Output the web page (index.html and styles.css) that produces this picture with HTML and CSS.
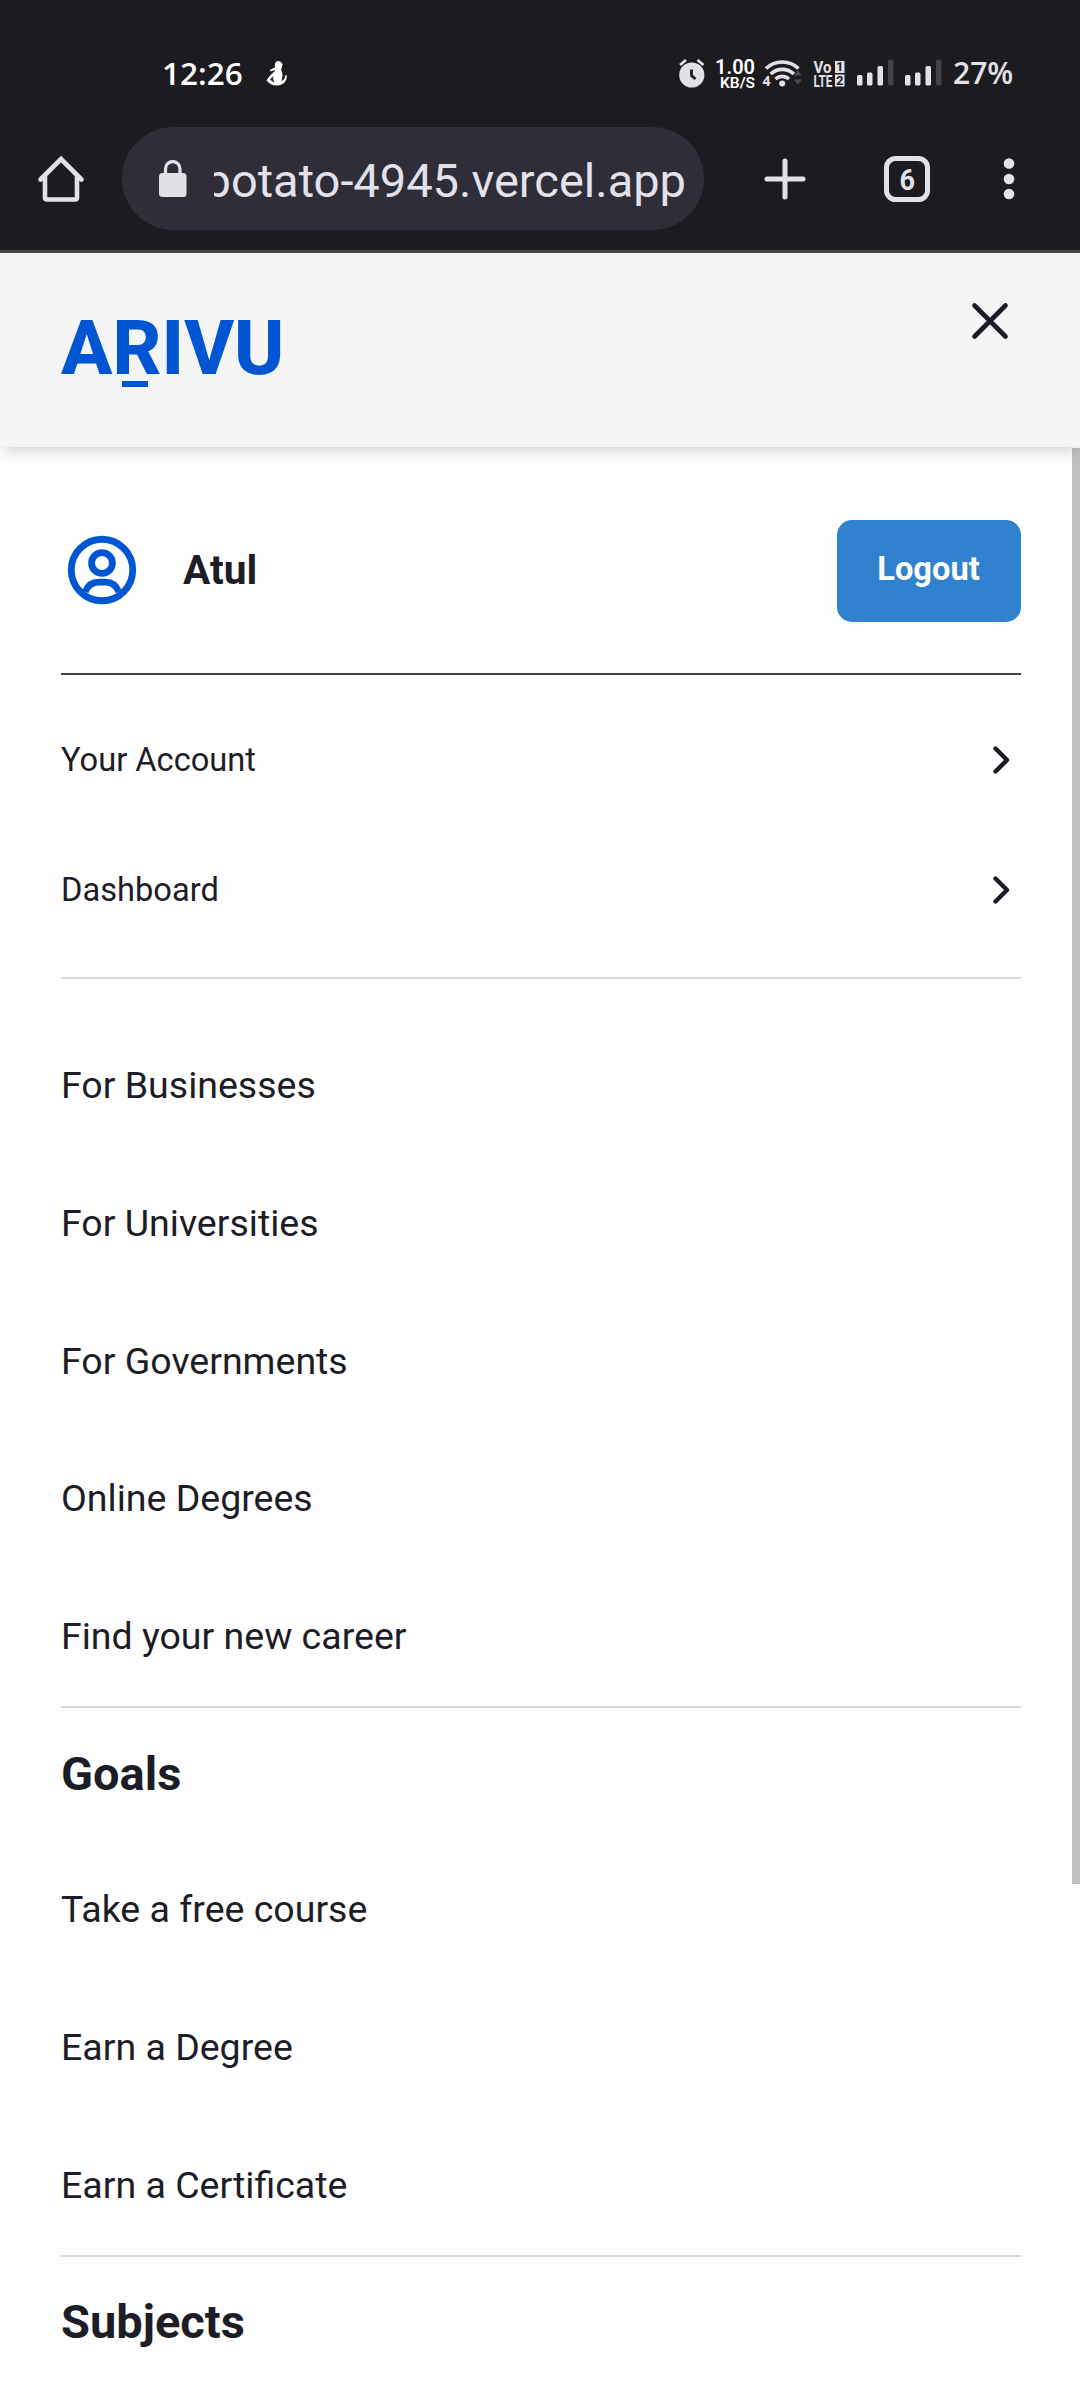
FILE: index.html
```
<!DOCTYPE html>
<html lang="en">
<head>
<meta charset="utf-8">
<title>Arivu</title>
<link rel="stylesheet" href="styles.css">
</head>
<body>
<div class="chrome">
  <div class="status">
    <span class="clock">12:26</span>
    <svg class="notif" width="24" height="26" viewBox="0 0 24 26" fill="#fff">
      <path d="M10 2.500a3.800 3.800 0 0 1 7 3c0 1.500-1 2.400-.8 3.500l1 3c.6 2 .3 4-.2 5.500l-.4 2.500c2.200-.7 3.500-2.500 3.600-5.500l1.500-.5c.5 5-2.200 10-9.700 10.500-4.500 0-8-2-10.500-5 2.500-4 4.500-6.500 8-9l.6-1.500-4.800 1.500-.5-1.500 5-2.500z"/>
      <path d="M5 18.500l3.500-3.500-.5 3 1.500 4z" fill="#1c1b20"/>
    </svg>
    <div class="indicators">
      <svg width="28" height="32" viewBox="0 0 28 32">
        <circle cx="13.800" cy="18" r="12.600" fill="#e3e1e6"/>
        <path d="M2 8l6-5M25.500 8l-6-5" stroke="#e3e1e6" stroke-width="2.800" fill="none"/>
        <path d="M13.500 12.500v6l4 3.500" stroke="#1c1b20" stroke-width="2.800" fill="none"/>
      </svg>
      <div class="speed"><span class="rate">1.00</span><span class="unit">KB/S</span></div>
      <svg class="wifi" width="40" height="32" viewBox="0 0 40 32">
        <g fill="none" stroke="#e3e1e6" stroke-width="3.600">
          <path d="M4 11.500a23.500 23.500 0 0 1 32.500 0"/><path d="M8.800 17a16.500 16.500 0 0 1 23 0"/><path d="M13.500 22a10 10 0 0 1 13.500 0"/>
        </g>
        <circle cx="20.200" cy="26.500" r="3" fill="#e3e1e6"/>
        <text x="0.500" y="29" class="wifi-gen">4</text>
        <path d="M31.500 18.500l4.500-5 4 5zM31.500 22.500h8.500l-4 5z" fill="#4b4a4f"/>
      </svg>
      <svg width="34" height="32" viewBox="0 0 34 32">
        <g class="volte" fill="#e3e1e6">
          <text x="1.500" y="15.500" textLength="18" lengthAdjust="spacingAndGlyphs">Vo</text>
          <text x="1.500" y="29.500" textLength="19" lengthAdjust="spacingAndGlyphs">LTE</text>
        </g>
        <path d="M23 4h9.500v12h-9.500zM23 17.500h9.500v12h-9.500z" fill="#e3e1e6"/>
        <g class="sim" fill="#1c1b20" text-anchor="middle"><text x="27.800" y="14">1</text><text x="27.800" y="27.700">2</text></g>
      </svg>
      <svg width="38" height="32" viewBox="0 0 38 32" fill="#e3e1e6">
        <rect x="1" y="18" width="5.500" height="10.500" rx="1.500"/><rect x="11" y="15.500" width="5.500" height="13" rx="1.500"/><rect x="21.500" y="9" width="5.500" height="19.500" rx="1.500"/><rect x="32" y="2.500" width="5.500" height="26" rx="1.500" fill="#434247"/>
      </svg>
      <svg width="38" height="32" viewBox="0 0 38 32" fill="#e3e1e6">
        <rect x="1" y="18" width="5.500" height="10.500" rx="1.500"/><rect x="11" y="15.500" width="5.500" height="13" rx="1.500"/><rect x="21.500" y="9" width="5.500" height="19.500" rx="1.500"/><rect x="32" y="2.500" width="5.500" height="26" rx="1.500" fill="#434247"/>
      </svg>
      <span class="battery">27%</span>
    </div>
  </div>
  <div class="toolbar">
    <svg class="home" width="48" height="48" viewBox="0 0 48 48" fill="none" stroke="#e3e1e6" stroke-width="4.600" stroke-linecap="round" stroke-linejoin="round">
      <path d="M8 22v20.500q0 2 2 2h28q2 0 2-2V22"/><path d="M3.500 24.500L24 4l20.500 20.500" stroke-linejoin="miter"/>
    </svg>
    <div class="omnibox">
      <svg width="28" height="38" viewBox="0 0 28 38">
        <rect x="0" y="13" width="27.500" height="24" rx="3.500" fill="#e3e1e6"/>
        <path d="M6.500 14V9a7 7.200 0 0 1 14.500 0v5" fill="none" stroke="#e3e1e6" stroke-width="3.200"/>
      </svg>
      <div class="url"><span>potato-4945.vercel.app</span></div>
    </div>
    <svg class="plus" width="42" height="42" viewBox="0 0 42 42" stroke="#e3e1e6" stroke-width="5" stroke-linecap="round"><path d="M21 3v36M3 21h36"/></svg>
    <svg class="tabs" width="48" height="48" viewBox="0 0 48 48">
      <rect x="3.500" y="3.500" width="41" height="41" rx="9" fill="none" stroke="#e3e1e6" stroke-width="5"/>
      <text x="16.500" y="34.500" textLength="15.500" lengthAdjust="spacingAndGlyphs" class="tab-count">6</text>
    </svg>
    <svg class="more" width="12" height="42" viewBox="0 0 12 42" fill="#e3e1e6"><circle cx="6" cy="5.500" r="5.300"/><circle cx="6" cy="21" r="5.300"/><circle cx="6" cy="36" r="5.300"/></svg>
  </div>
</div>

<header class="header">
  <a class="logo">A<span class="logo-r">R</span>IVU</a>
  <svg class="close" width="38" height="38" viewBox="0 0 38 38" stroke="#1b1c25" stroke-width="4.600" stroke-linecap="round"><path d="M3.500 3.500l31 31M34.500 3.500l-31 31"/></svg>
</header>

<main class="menu">
  <section class="user">
    <svg class="avatar" width="82" height="82" viewBox="0 0 24 24" fill="none" stroke="#0056d2" stroke-width="2">
      <circle cx="12" cy="12" r="9"/><circle cx="12" cy="9.950" r="3.050"/><path d="M7.100 18.400C7.900 16.300 9.300 15.550 11 15.550h2c1.700 0 3.100.75 3.900 2.850"/>
    </svg>
    <span class="name">Atul</span>
    <button class="logout">Logout</button>
  </section>
  <nav class="account">
    <a class="row">Your Account<svg width="18" height="30" viewBox="0 0 18 30"><path d="M3.500 3.500L15 15 3.500 26.500"/></svg></a>
    <a class="row">Dashboard<svg width="18" height="30" viewBox="0 0 18 30"><path d="M3.500 3.500L15 15 3.500 26.500"/></svg></a>
  </nav>
  <nav class="links first">
    <a>For Businesses</a><a>For Universities</a><a>For Governments</a><a>Online Degrees</a><a>Find your new career</a>
  </nav>
  <nav class="links">
    <h2>Goals</h2>
    <a>Take a free course</a><a>Earn a Degree</a><a>Earn a Certificate</a>
  </nav>
  <nav class="links last"><h2>Subjects</h2></nav>
  <div class="scrollbar"></div>
</main>
</body>
</html>
```
FILE: styles.css
```
* { box-sizing: border-box; }
body {
  margin: 0; height: 2400px; overflow: hidden;
  display: flex; flex-direction: column;
  background: #fefefe; color: #1c1d26;
  font-family: Roboto, sans-serif;
}
svg { display: block; flex: none; }

.chrome { height: 253px; flex: none; background: #1c1b20; border-bottom: 3px solid #49474c; }
.status { height: 127px; padding: 20px 67px 0 162px; display: flex; align-items: center; color: #fff; }
.clock { font: 600 31.500px/38px "Open Sans", sans-serif; width: 103px; margin-top: -2px; }
.indicators { margin-left: auto; margin-top: -2px; display: flex; align-items: center; gap: 10px; }
.speed { width: 39px; display: flex; flex-direction: column; align-items: flex-end; font-weight: 600; margin-top: 2px; }
.rate { font-size: 20px; line-height: 18px; }
.unit { font-size: 15.500px; line-height: 14px; }
.wifi { margin-left: -3px; }
.wifi-gen { font: 700 14px "Open Sans", sans-serif; fill: #e3e1e6; }
.volte { font: 700 17px Roboto, sans-serif; }
.sim { font: 700 13px Roboto, sans-serif; }
.battery { width: 60px; font: 600 30px/40px "Open Sans", sans-serif; color: #e3e1e6; margin-left: 1px; }

.toolbar { height: 103px; padding: 0 65px 0 37px; display: flex; align-items: center; }
.omnibox { width: 582px; height: 103px; margin-left: 37px; padding: 0 18px 0 37px; border-radius: 52px; background: #2e2d38; display: flex; align-items: center; gap: 27px; }
.url { flex: 1; height: 60px; overflow: hidden; display: flex; justify-content: flex-end; font-size: 47px; line-height: 64px; color: #e3e1ec; white-space: nowrap; }
.plus { margin-left: 60px; }
.tabs { margin-left: 77px; }
.tab-count { font: 700 30px Roboto, sans-serif; fill: #e3e1e6; }
.more { margin-left: auto; }

.header {
  height: 194px; flex: none; padding: 0 71px 0 61px; position: relative; z-index: 1;
  display: flex; justify-content: space-between;
  background: #f5f5f5;
  box-shadow: 0 10px 15px -3px rgba(0,0,0,.1), 0 5px 10px -3px rgba(0,0,0,.06);
}
.logo { font-size: 76px; font-weight: 800; line-height: 191px; color: #0056d2; }
.logo-r { position: relative; }
.logo-r::after { content: ""; position: absolute; left: 10px; bottom: 6px; width: 26px; height: 6px; background: #0056d2; }
.close { margin-top: 49px; }

.menu { flex: 1; padding: 0 59px 0 61px; position: relative; }
.user { height: 228px; padding-top: 73px; display: flex; align-items: flex-start; border-bottom: 2px solid #414045; }
.avatar { margin-top: 9px; }
.name { margin-left: 40px; font-size: 40.600px; font-weight: 700; line-height: 101px; }
.logout { margin-left: auto; width: 184px; height: 102px; padding: 0 1px 4px 0; border: 0; border-radius: 15px; background: #3182ce; color: #fff; font: 700 32.640px Roboto, sans-serif; }

.account { height: 304px; padding-top: 20px; border-bottom: 2px solid #dadada; }
.row { display: flex; justify-content: space-between; align-items: center; height: 130px; padding-right: 11px; font-size: 32.640px; }
.row svg { fill: none; stroke: #1b1c25; stroke-width: 4.400; stroke-linecap: round; stroke-linejoin: round; }

.links { padding-bottom: .5px; border-bottom: 2px solid #dadada; }
.links a { display: block; height: 137.750px; line-height: 137.750px; font-size: 37.500px; }
.links h2 { margin: 0; font-size: 47px; line-height: 132px; padding-bottom: 1px; }
.first { padding-top: 38px; }
.last { border: 0; }
.last h2 { line-height: 129px; }

.scrollbar { position: absolute; right: 0; top: 1px; width: 8px; height: 1436px; background: #c0c0c0; }
```
